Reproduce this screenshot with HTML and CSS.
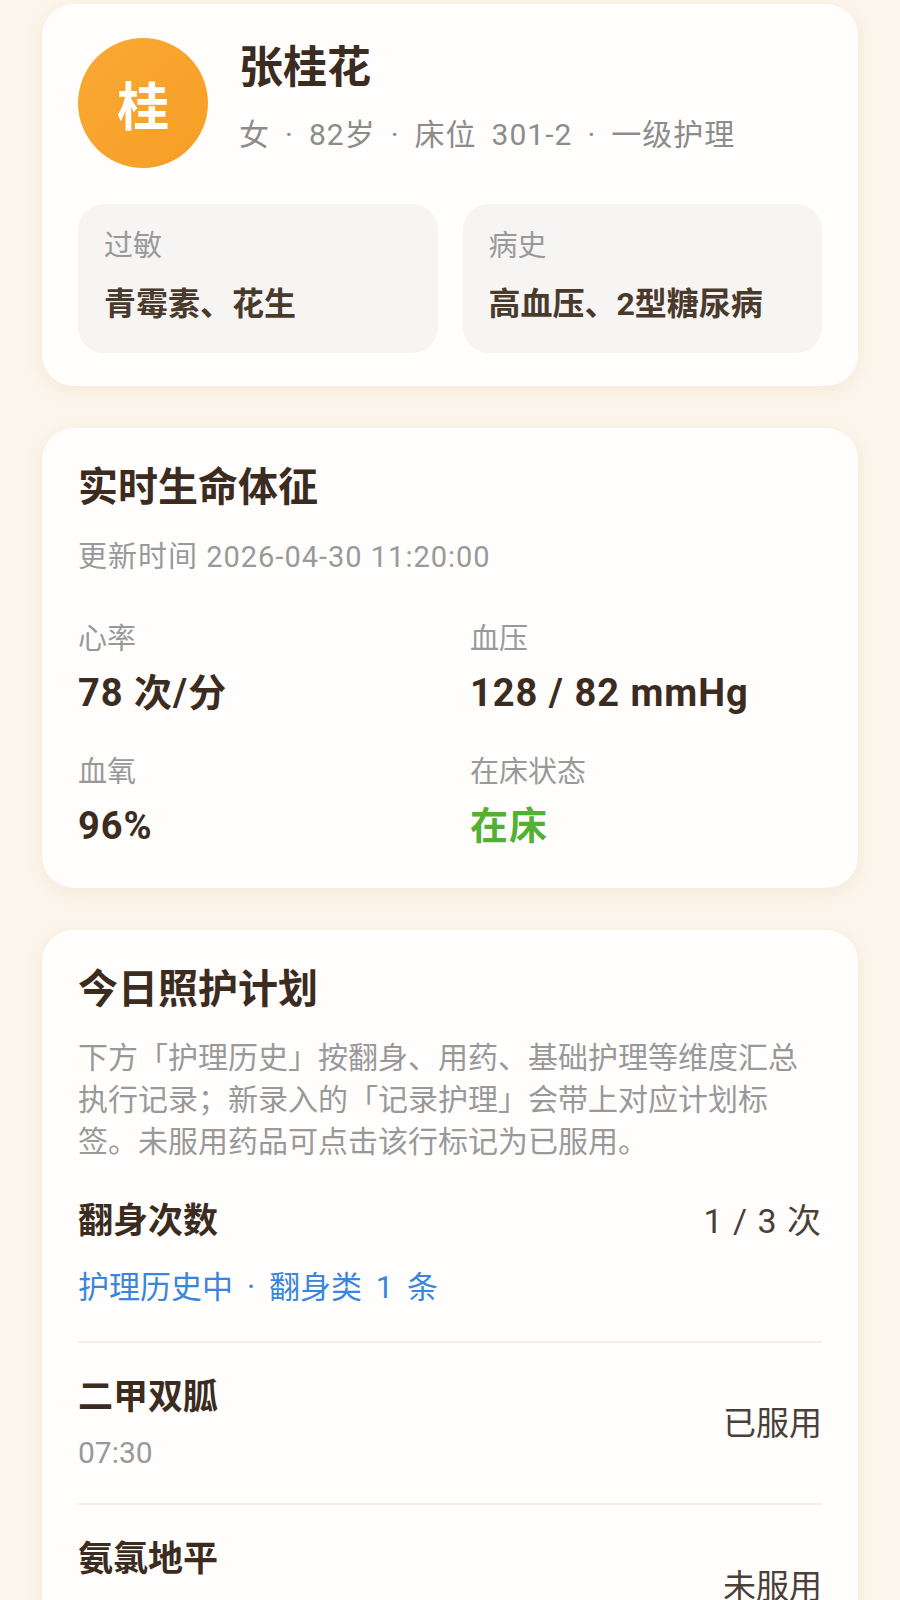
FILE: index.html
```html
<!DOCTYPE html>
<html lang="zh-CN">
<head>
    <meta charset="UTF-8">
    <meta name="viewport" content="width=device-width, initial-scale=1.0">
    <title>老人详情</title>
    <link rel="stylesheet" href="styles.css">
</head>
<body>
    <main class="page">
        <section class="card profile">
            <div class="profile-head">
                <div class="avatar">桂</div>
                <div class="profile-info">
                    <h1 class="name">张桂花</h1>
                    <p class="meta">女 · 82岁 · 床位 301-2 · 一级护理</p>
                </div>
            </div>
            <div class="tags">
                <div class="tag-box">
                    <div class="tag-label">过敏</div>
                    <div class="tag-value">青霉素、花生</div>
                </div>
                <div class="tag-box">
                    <div class="tag-label">病史</div>
                    <div class="tag-value">高血压、2型糖尿病</div>
                </div>
            </div>
        </section>

        <section class="card vitals">
            <h2 class="card-title">实时生命体征</h2>
            <p class="updated">更新时间 2026-04-30 11:20:00</p>
            <div class="vital-grid">
                <div class="vital">
                    <div class="vital-label">心率</div>
                    <div class="vital-value">78 次/分</div>
                </div>
                <div class="vital">
                    <div class="vital-label">血压</div>
                    <div class="vital-value">128 / 82 mmHg</div>
                </div>
                <div class="vital">
                    <div class="vital-label">血氧</div>
                    <div class="vital-value">96%</div>
                </div>
                <div class="vital">
                    <div class="vital-label">在床状态</div>
                    <div class="vital-value in-bed">在床</div>
                </div>
            </div>
        </section>

        <section class="card plan">
            <h2 class="card-title">今日照护计划</h2>
            <p class="plan-desc">下方「护理历史」按翻身、用药、基础护理等维度汇总执行记录；新录入的「记录护理」会带上对应计划标签。未服用药品可点击该行标记为已服用。</p>

            <div class="plan-row turn">
                <div class="plan-main">
                    <div class="plan-name">翻身次数</div>
                    <div class="plan-link">护理历史中 · 翻身类 1 条</div>
                </div>
                <div class="plan-count">1 / 3 次</div>
            </div>

            <div class="plan-row med">
                <div class="plan-main">
                    <div class="plan-name">二甲双胍</div>
                    <div class="plan-time">07:30</div>
                </div>
                <div class="plan-status">已服用</div>
            </div>

            <div class="plan-row med">
                <div class="plan-main">
                    <div class="plan-name">氨氯地平</div>
                    <div class="plan-time">08:00</div>
                </div>
                <div class="plan-status">未服用</div>
            </div>
        </section>
    </main>
</body>
</html>
```

FILE: styles.css
```css
body {
    margin: 0;
    background: #fcf5ec;
    font-family: Roboto, "Noto Sans CJK SC", sans-serif;
    color: #3b2c1f;
}

.page {
    padding: 4px 42px 40px;
}

.card {
    background: #fffefd;
    border-radius: 32px;
    padding: 34px 36px 33px;
    margin-bottom: 42px;
    box-shadow: 0 4px 18px rgba(214, 170, 110, 0.16);
}

/* profile */
.profile-head {
    display: flex;
    align-items: center;
    gap: 31px;
}

.avatar {
    width: 130px;
    height: 130px;
    border-radius: 50%;
    background: linear-gradient(135deg, #f9a935, #f69e25);
    color: #fff;
    font-size: 52px;
    font-weight: 700;
    display: flex;
    align-items: center;
    justify-content: center;
    flex-shrink: 0;
}

.profile-info {
    margin-bottom: 8px;
}

.name {
    margin: 0;
    font-size: 44px;
    line-height: 1.2;
    font-weight: 700;
}

.meta {
    margin: 19px 0 0;
    font-size: 30px;
    line-height: 1.4;
    letter-spacing: 1px;
    word-spacing: 0.22em;
    color: #8c8c8c;
}

.tags {
    display: grid;
    grid-template-columns: 1fr 1fr;
    gap: 25px;
    margin-top: 36px;
}

.tag-box {
    background: #f6f5f4;
    border-radius: 26px;
    padding: 22px 26px 27px;
}

.tag-label {
    font-size: 29px;
    line-height: 1.4;
    color: #999;
}

.tag-value {
    margin-top: 15px;
    font-size: 32px;
    line-height: 1.4;
    font-weight: 700;
    color: #4a3a2c;
}

/* vitals */
.card-title {
    margin: 0;
    font-size: 40px;
    line-height: 1.3;
    font-weight: 700;
}

.vitals {
    padding-top: 34px;
    padding-bottom: 37px;
}

.updated {
    margin: 23px 0 0;
    font-size: 29px;
    line-height: 1.4;
    letter-spacing: 1px;
    color: #999;
}

.vital-grid {
    display: grid;
    grid-template-columns: 1fr 1fr;
    column-gap: 40px;
    row-gap: 34px;
    margin-top: 41px;
}

.vital-label {
    font-size: 29px;
    line-height: 1.4;
    color: #999;
}

.vital-value {
    margin-top: 9px;
    font-size: 38px;
    line-height: 1.3;
    letter-spacing: 1px;
    font-weight: 700;
}

.vital-value.in-bed {
    color: #52b135;
}

/* plan */
.plan-desc {
    margin: 21px 0 0;
    font-size: 30px;
    line-height: 42px;
    color: #999;
}

.plan-row {
    display: flex;
    align-items: center;
    justify-content: space-between;
}

.plan-row.turn {
    align-items: flex-start;
    margin-top: 36px;
    padding-bottom: 31px;
    border-bottom: 2px solid #f1f1f1;
}

.plan-row.med {
    padding: 32px 0 29px;
    border-bottom: 2px solid #f1f1f1;
}

.plan-name {
    font-size: 35px;
    line-height: 1.3;
    font-weight: 600;
}

.plan-link {
    margin-top: 22px;
    font-size: 31px;
    line-height: 1.4;
    word-spacing: 0.2em;
    color: #3a86dd;
}

.plan-time {
    margin-top: 12px;
    font-size: 30px;
    line-height: 1.4;
    color: #999;
}

.plan-count {
    font-size: 34px;
    line-height: 1.3;
    letter-spacing: 1px;
    color: #4a4038;
}

.plan-status {
    font-size: 33px;
    line-height: 1.3;
    color: #4a4038;
}
```
